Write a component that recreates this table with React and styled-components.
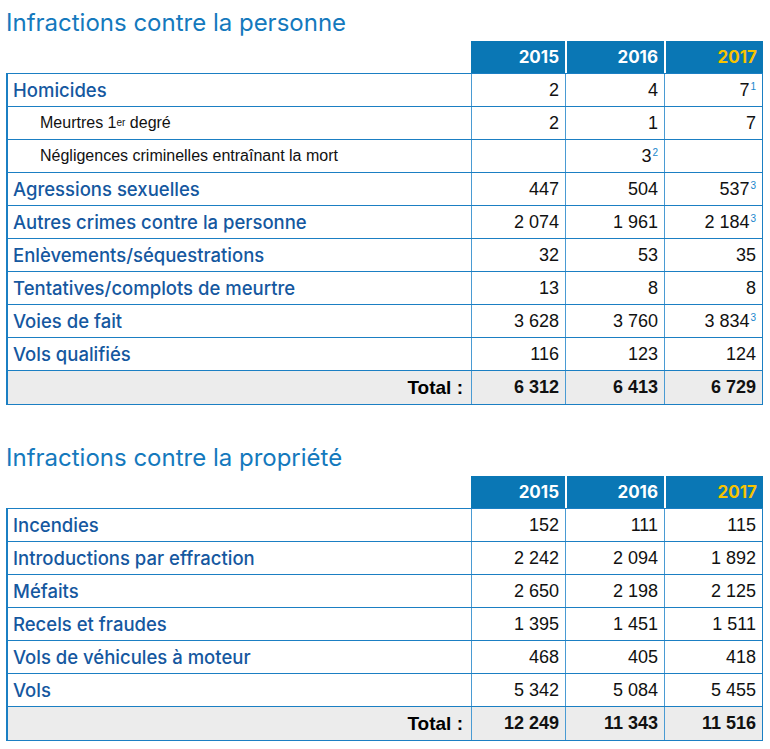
import React from "react";
import styled, { createGlobalStyle } from "styled-components";

const GlobalStyle = createGlobalStyle`
  body {
    margin: 0;
    background: #fff;
    font-family: "Liberation Sans", Arial, sans-serif;
  }
`;

const Page = styled.div`
  width: 770px;
  padding: 6px 0 0 6px;
  box-sizing: border-box;
`;

const Section = styled.section`
  margin-bottom: 38px;
`;

const Title = styled.h2`
  margin: 2px 0 3px;
  font-family: Inter, sans-serif;
  font-weight: 400;
  font-size: 24px;
  line-height: 30px;
  color: #1479bd;
`;

const Grid = styled.div`
  display: grid;
  grid-template-columns: 465px 94px 99px 99px;
`;

const HeadRow = styled(Grid)`
  height: 32px;
`;

const HeadCell = styled.div`
  background: ${({ empty }) => (empty ? "transparent" : "#0a77b5")};
  border-left: ${({ sep }) => (sep ? "2px solid #fff" : "none")};
  color: ${({ current }) => (current ? "#f7c300" : "#fff")};
  font-family: Inter, sans-serif;
  font-weight: 700;
  font-size: 17px;
  display: flex;
  align-items: center;
  justify-content: flex-end;
  padding-right: 6px;
`;

const Body = styled.div`
  border: 1px solid #1b7fc3;
  border-left-width: 2px;
  width: 757px;
  box-sizing: border-box;
`;

const Row = styled(Grid)`
  grid-template-columns: 463px 94px 99px 98px;
  height: 33px;
  border-bottom: ${({ last }) => (last ? "none" : "1px solid #1b7fc3")};
  background: ${({ total }) => (total ? "#ececec" : "#fff")};
  box-sizing: border-box;
`;

const Label = styled.div`
  display: flex;
  align-items: center;
  padding-left: ${({ sub }) => (sub ? "32px" : "5px")};
  font-family: ${({ sub }) =>
    sub ? '"Liberation Sans", Arial, sans-serif' : "Inter, sans-serif"};
  font-size: ${({ sub }) => (sub ? "16px" : "18.5px")};
  font-weight: ${({ sub }) => (sub ? 400 : 500)};
  color: ${({ sub }) => (sub ? "#111" : "#15589f")};
  sup {
    font-size: 10px;
    line-height: 0;
    vertical-align: 7px;
  }
`;

const TotalLabel = styled.div`
  display: flex;
  align-items: center;
  justify-content: flex-end;
  padding-right: 8px;
  font-weight: 700;
  font-size: 19px;
  color: #000;
`;

const Num = styled.div`
  display: flex;
  align-items: center;
  justify-content: flex-end;
  padding-right: 6px;
  border-left: 1px solid #4a9bd3;
  font-size: 18px;
  font-weight: ${({ bold }) => (bold ? 700 : 400)};
  color: #111;
  sup {
    align-self: flex-start;
    margin-top: 8px;
    font-size: 10px;
    line-height: 10px;
    color: #1a86cc;
    margin-left: 1px;
  }
`;

const personne = [
  { label: "Homicides", v: ["2", "4", ["7", "1"]] },
  { label: "Meurtres 1", sup: "er", rest: "degré", sub: true, v: ["2", "1", "7"] },
  { label: "Négligences criminelles entraînant la mort", sub: true, v: ["", ["3", "2"], ""] },
  { label: "Agressions sexuelles", v: ["447", "504", ["537", "3"]] },
  { label: "Autres crimes contre la personne", v: ["2 074", "1 961", ["2 184", "3"]] },
  { label: "Enlèvements/séquestrations", v: ["32", "53", "35"] },
  { label: "Tentatives/complots de meurtre", v: ["13", "8", "8"] },
  { label: "Voies de fait", v: ["3 628", "3 760", ["3 834", "3"]] },
  { label: "Vols qualifiés", v: ["116", "123", "124"] },
];

const propriete = [
  { label: "Incendies", v: ["152", "111", "115"] },
  { label: "Introductions par effraction", v: ["2 242", "2 094", "1 892"] },
  { label: "Méfaits", v: ["2 650", "2 198", "2 125"] },
  { label: "Recels et fraudes", v: ["1 395", "1 451", "1 511"] },
  { label: "Vols de véhicules à moteur", v: ["468", "405", "418"] },
  { label: "Vols", v: ["5 342", "5 084", "5 455"] },
];

function Value({ v }) {
  if (Array.isArray(v)) {
    return (
      <>
        {v[0]}
        <sup>{v[1]}</sup>
      </>
    );
  }
  return v;
}

function StatTable({ title, rows, totals }) {
  return (
    <Section>
      <Title>{title}</Title>
      <HeadRow>
        <HeadCell empty />
        <HeadCell>2015</HeadCell>
        <HeadCell sep>2016</HeadCell>
        <HeadCell sep current>
          2017
        </HeadCell>
      </HeadRow>
      <Body>
        {rows.map((r) => (
          <Row key={r.label}>
            <Label sub={r.sub}>
              {r.label}
              {r.sup && <sup>{r.sup}</sup>}
              {r.rest && <>&nbsp;{r.rest}</>}
            </Label>
            {r.v.map((v, i) => (
              <Num key={i}>
                <Value v={v} />
              </Num>
            ))}
          </Row>
        ))}
        <Row total last>
          <TotalLabel>Total :</TotalLabel>
          {totals.map((t) => (
            <Num bold key={t}>
              {t}
            </Num>
          ))}
        </Row>
      </Body>
    </Section>
  );
}

export default function App() {
  return (
    <Page>
      <GlobalStyle />
      <StatTable
        title="Infractions contre la personne"
        rows={personne}
        totals={["6 312", "6 413", "6 729"]}
      />
      <StatTable
        title="Infractions contre la propriété"
        rows={propriete}
        totals={["12 249", "11 343", "11 516"]}
      />
    </Page>
  );
}
